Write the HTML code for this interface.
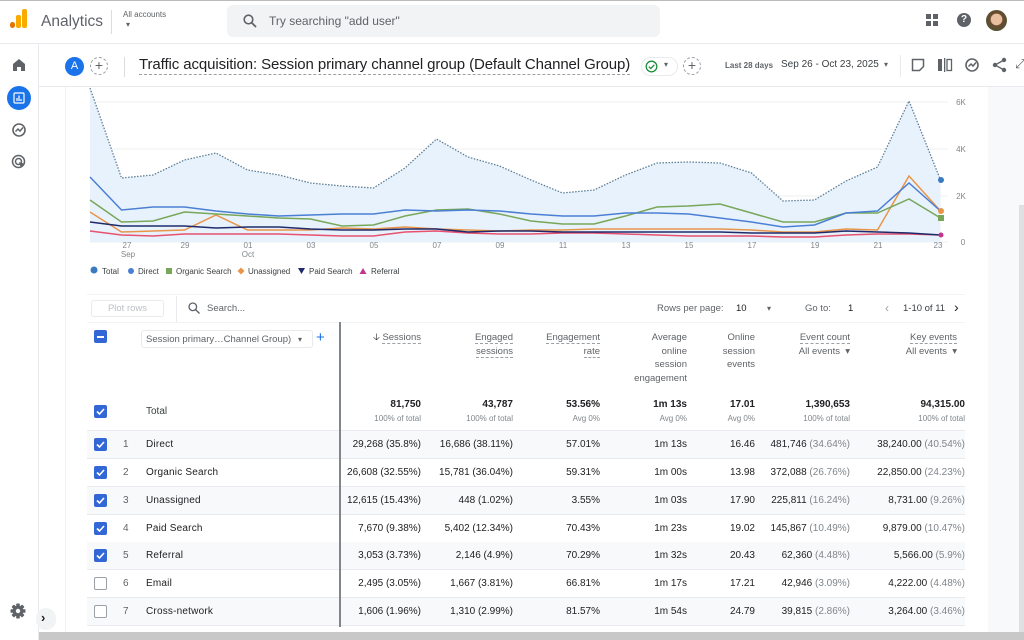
<!DOCTYPE html>
<html><head><meta charset="utf-8">
<style>
*{box-sizing:border-box;margin:0;padding:0}
body{width:1024px;height:640px;overflow:hidden;background:#fff;font-family:"Liberation Sans",Arial,sans-serif;color:#3c4043;position:relative}
.a{position:absolute}
.t{position:absolute;white-space:nowrap}
.cb{position:absolute;width:13px;height:13px;border-radius:2px;background:#3367d6}
.cb svg{position:absolute;left:1px;top:1px}
.cbo{position:absolute;width:13px;height:13px;border-radius:2px;border:1.5px solid #9aa0a6;background:#fff}
.row{position:absolute;left:87px;width:878px;height:28px;border-bottom:1px solid #e8eaed}
.g{background:#f8f9fa}
.c{position:absolute;font-size:10px;color:#202124;top:9px;white-space:nowrap;text-align:right}
.p{color:#80868b}
.h{font-size:9.5px;color:#5f6368;line-height:13.5px;text-align:right;position:absolute}
.u{border-bottom:1px dashed #9aa0a6}
.lb{position:absolute;white-space:nowrap;left:146px;font-size:10px;color:#202124;letter-spacing:0.2px}
</style></head><body>
<!-- top bar -->
<div class="a" style="left:0;top:0;width:1024px;height:1px;background:#bbb"></div>
<div class="a" style="left:0;top:43px;width:1024px;height:1px;background:#e8eaed"></div>
<div class="a" style="left:10px;top:22px;width:5px;height:6px;border-radius:3px;background:#e37400"></div>
<div class="a" style="left:16px;top:15px;width:5px;height:13px;border-radius:2px;background:#f9ab00"></div>
<div class="a" style="left:22px;top:9px;width:5px;height:19px;border-radius:2px;background:#f9ab00"></div>
<div class="t" style="left:41px;top:13px;font-size:15.5px;color:#5f6368">Analytics</div>
<div class="a" style="left:111px;top:10px;width:1px;height:24px;background:#dadce0"></div>
<div class="t" style="left:123px;top:10px;font-size:8px;color:#5f6368">All accounts</div>
<div class="t" style="left:126px;top:20px;font-size:8px;color:#5f6368">▾</div>
<div class="a" style="left:227px;top:5px;width:433px;height:32px;border-radius:6px;background:#f1f3f4"></div>
<svg class="a" style="left:243px;top:14px" width="14" height="14"><circle cx="5.5" cy="5.5" r="4.3" fill="none" stroke="#5f6368" stroke-width="1.6"/><path d="M8.6 8.6L13 13" stroke="#5f6368" stroke-width="1.8"/></svg>
<div class="t" style="left:269px;top:14px;font-size:12px;color:#5f6368">Try searching "add user"</div>
<svg class="a" style="left:926px;top:14px" width="12" height="12"><rect x="0" y="0" width="5" height="5" fill="#5f6368"/><rect x="7" y="0" width="5" height="5" fill="#5f6368"/><rect x="0" y="7" width="5" height="5" fill="#5f6368"/><rect x="7" y="7" width="5" height="5" fill="#5f6368"/></svg>
<div class="a" style="left:957px;top:13px;width:14px;height:14px;border-radius:50%;background:#5f6368;color:#fff;font-size:10px;font-weight:bold;text-align:center;line-height:14px">?</div>
<div class="a" style="left:986px;top:10px;width:21px;height:21px;border-radius:50%;background:radial-gradient(circle at 50% 45%,#e8c0a0 0 35%,#6b4a2e 40%,#3d5a3a 100%)"></div>
<!-- left nav -->
<div class="a" style="left:38px;top:44px;width:1px;height:596px;background:#e8eaed"></div>
<svg class="a" style="left:12px;top:58px" width="14" height="14"><path d="M1 6L7 1L13 6V13H9V9H5V13H1Z" fill="#5f6368"/></svg>
<div class="a" style="left:7px;top:86px;width:24px;height:24px;border-radius:50%;background:#1a73e8"></div>
<svg class="a" style="left:13px;top:92px" width="12" height="12"><rect x="1" y="1" width="10" height="10" rx="1" fill="none" stroke="#fff" stroke-width="1.2"/><path d="M4 9V6M6 9V3.5M8 9V7" stroke="#fff" stroke-width="1.2"/></svg>
<svg class="a" style="left:11px;top:122px" width="16" height="16"><circle cx="8" cy="8" r="6" fill="none" stroke="#5f6368" stroke-width="1.6"/><path d="M4.5 9.5L7 7L9 9L12 5.5" fill="none" stroke="#5f6368" stroke-width="1.5"/></svg>
<svg class="a" style="left:11px;top:154px" width="16" height="16"><circle cx="7.5" cy="7.5" r="6" fill="none" stroke="#5f6368" stroke-width="1.5"/><circle cx="7.5" cy="7.5" r="3" fill="none" stroke="#5f6368" stroke-width="1.5"/><path d="M8 8L14 10L11.5 11.5L10 14Z" fill="#5f6368"/></svg>
<svg class="a" style="left:10px;top:603px" width="16" height="16"><g fill="#5f6368" transform="translate(8 8)"><rect x="-1.8" y="-7.5" width="3.6" height="15" rx="0.8"/><rect x="-1.8" y="-7.5" width="3.6" height="15" rx="0.8" transform="rotate(45)"/><rect x="-1.8" y="-7.5" width="3.6" height="15" rx="0.8" transform="rotate(90)"/><rect x="-1.8" y="-7.5" width="3.6" height="15" rx="0.8" transform="rotate(135)"/><circle r="5.3"/><circle r="2.2" fill="#fff"/></g></svg>
<div class="a" style="left:36px;top:608px;width:20px;height:22px;border-radius:10px;background:#f1f3f4"></div>
<div class="t" style="left:41px;top:610px;font-size:13px;color:#202124;font-weight:bold">›</div>
<!-- subheader -->
<div class="a" style="left:39px;top:86px;width:985px;height:1px;background:#e8eaed"></div>
<div class="a" style="left:65px;top:57px;width:19px;height:19px;border-radius:50%;background:#1a73e8;color:#fff;font-size:11px;text-align:center;line-height:19px">A</div>
<div class="a" style="left:90px;top:57px;width:18px;height:18px;border-radius:50%;border:1px dashed #9aa0a6;color:#5f6368;font-size:14px;text-align:center;line-height:15px">+</div>
<div class="a" style="left:124px;top:57px;width:1px;height:20px;background:#dadce0"></div>
<div class="t" style="left:139px;top:56px;font-size:15px;letter-spacing:-0.1px;color:#202124;border-bottom:1px dashed #9aa0a6;line-height:18px">Traffic acquisition: Session primary channel group (Default Channel Group)</div>
<div class="a" style="left:641px;top:57px;width:37px;height:19px;border-radius:10px;border:1px solid #e8eaed;background:#fff"></div>
<svg class="a" style="left:645px;top:60px" width="13" height="13"><circle cx="6.5" cy="6.5" r="5.3" fill="none" stroke="#1e8e3e" stroke-width="1.3"/><path d="M3.8 6.7L5.8 8.6L9.3 4.8" fill="none" stroke="#1e8e3e" stroke-width="1.3"/></svg>
<div class="t" style="left:664px;top:60px;font-size:8px;color:#5f6368">▾</div>
<div class="a" style="left:683px;top:57px;width:18px;height:18px;border-radius:50%;border:1px dashed #9aa0a6;color:#5f6368;font-size:14px;text-align:center;line-height:15px">+</div>
<div class="t" style="left:725px;top:61px;font-size:8px;color:#5f6368;font-weight:bold">Last 28 days</div>
<div class="t" style="left:781px;top:59px;font-size:10px;color:#3c4043">Sep 26 - Oct 23, 2025</div>
<div class="t" style="left:884px;top:60px;font-size:8px;color:#5f6368">▾</div>
<div class="a" style="left:900px;top:55px;width:1px;height:22px;background:#e8eaed"></div>
<svg class="a" style="left:911px;top:58px" width="14" height="14"><path d="M1.5 1.5H12.5V8.5L8.5 12.5H1.5Z" fill="none" stroke="#5f6368" stroke-width="1.5"/></svg>
<svg class="a" style="left:937px;top:58px" width="16" height="14"><rect x="1" y="1" width="4" height="12" fill="#5f6368"/><rect x="7" y="0" width="1.3" height="14" fill="#5f6368"/><rect x="10" y="1.5" width="4.5" height="11" fill="none" stroke="#5f6368" stroke-width="1.3"/></svg>
<svg class="a" style="left:964px;top:57px" width="16" height="16"><circle cx="8" cy="8" r="6" fill="none" stroke="#5f6368" stroke-width="1.6"/><path d="M4.5 9.5L7 7L9 9L12 5.5" fill="none" stroke="#5f6368" stroke-width="1.5"/></svg>
<svg class="a" style="left:992px;top:57px" width="15" height="16"><circle cx="12" cy="3" r="2.2" fill="#5f6368"/><circle cx="3" cy="8" r="2.2" fill="#5f6368"/><circle cx="12" cy="13" r="2.2" fill="#5f6368"/><path d="M12 3L3 8L12 13" fill="none" stroke="#5f6368" stroke-width="1.3"/></svg>
<div class="t" style="left:1015px;top:56px;font-size:13px;color:#5f6368">⤢</div>
<!-- right gutter -->
<div class="a" style="left:988px;top:87px;width:36px;height:545px;background:#f8f9fa"></div>
<div class="a" style="left:1019px;top:205px;width:5px;height:427px;background:#e0e0e0"></div>
<div class="a" style="left:39px;top:632px;width:985px;height:8px;background:#c8c8c8"></div>
<div class="a" style="left:65px;top:87px;width:1px;height:545px;background:#eef0f2"></div>
<!-- chart -->
<svg class="a" style="left:0;top:0" width="1024" height="640">
<g stroke="#eef0f2" stroke-width="1"><line x1="90" y1="102" x2="948" y2="102"/><line x1="90" y1="149" x2="948" y2="149"/><line x1="90" y1="196" x2="948" y2="196"/><line x1="90" y1="242" x2="948" y2="242"/></g>
<polygon fill="#e8f2fc" points="90,242 90,88 121.5,178 153,175 184.5,160 216,153 247.5,170 279,175 310.5,183 342,186 373.5,188 405,168 436.5,139 468,157 499.5,166 531,180 562.5,193 594,190 625.5,175 657,163 688.5,162 720,163 751.5,173 783,201 814.5,200 846,181 877.5,167 909,101 940.5,180 940.5,242"/>
<polyline fill="none" stroke="#5f7f95" stroke-width="1.3" stroke-dasharray="1.5 1.5" points="90,88 121.5,178 153,175 184.5,160 216,153 247.5,170 279,175 310.5,183 342,186 373.5,188 405,168 436.5,139 468,157 499.5,166 531,180 562.5,193 594,190 625.5,175 657,163 688.5,162 720,163 751.5,173 783,201 814.5,200 846,181 877.5,167 909,101 940.5,180"/>
<polyline fill="none" stroke="#e8516f" stroke-width="1.5" points="90,231 121.5,235 153,236 184.5,234 216,234 247.5,234 279,234 310.5,235 342,236 373.5,236 405,232 436.5,231 468,233 499.5,234 531,234 562.5,233 594,233 625.5,234 657,235 688.5,236 720,236 751.5,236 783,237 814.5,237 846,235 877.5,234 909,234 940.5,235"/>
<polyline fill="none" stroke="#e8954a" stroke-width="1.5" points="90,212 121.5,232 153,231 184.5,230 216,215 247.5,230 279,230 310.5,230 342,228 373.5,229 405,227 436.5,229 468,230 499.5,231 531,230 562.5,230 594,229 625.5,229 657,229 688.5,229 720,229 751.5,230 783,232 814.5,232 846,229 877.5,230 909,176 940.5,211"/>
<polyline fill="none" stroke="#1f2a6b" stroke-width="1.5" points="90,222 121.5,226 153,226 184.5,226 216,228 247.5,227 279,227 310.5,229 342,230 373.5,230 405,229 436.5,229 468,232 499.5,231 531,231 562.5,232 594,232 625.5,232 657,232 688.5,232 720,232 751.5,233 783,233 814.5,233 846,231 877.5,232 909,233 940.5,235"/>
<polyline fill="none" stroke="#78a75a" stroke-width="1.5" points="90,200 121.5,222 153,221 184.5,212 216,214 247.5,216 279,218 310.5,219 342,226 373.5,225 405,216 436.5,210 468,209 499.5,214 531,221 562.5,224 594,224 625.5,216 657,207 688.5,206 720,204 751.5,213 783,222 814.5,222 846,213 877.5,213 909,199 940.5,218"/>
<polyline fill="none" stroke="#4a7fd4" stroke-width="1.5" points="90,177 121.5,210 153,207 184.5,207 216,211 247.5,214 279,216 310.5,215 342,214 373.5,214 405,210 436.5,211 468,210 499.5,211 531,214 562.5,216 594,216 625.5,213 657,213 688.5,214 720,218 751.5,222 783,227 814.5,225 846,213 877.5,211 909,183 940.5,211"/>
<circle cx="941" cy="180" r="3" fill="#3a7bbf"/><circle cx="941" cy="211" r="3" fill="#e8954a"/><rect x="938" y="215" width="6" height="6" fill="#78a75a"/><circle cx="941" cy="235" r="2.5" fill="#c2368a"/>
<g font-family="Liberation Sans" font-size="8" fill="#80868b" text-anchor="middle">
<text x="127" y="248">27</text><text x="128" y="257">Sep</text><text x="185" y="248">29</text><text x="248" y="248">01</text><text x="248" y="257">Oct</text><text x="311" y="248">03</text><text x="374" y="248">05</text><text x="437" y="248">07</text><text x="500" y="248">09</text><text x="563" y="248">11</text><text x="626" y="248">13</text><text x="689" y="248">15</text><text x="752" y="248">17</text><text x="815" y="248">19</text><text x="878" y="248">21</text><text x="938" y="248">23</text>
<text x="961" y="105">6K</text><text x="961" y="152">4K</text><text x="961" y="199">2K</text><text x="963" y="245">0</text></g>
<g font-family="Liberation Sans" font-size="8" fill="#3c4043">
<circle cx="94" cy="270" r="3.5" fill="#3a7bbf"/><text x="102" y="274">Total</text>
<circle cx="131" cy="271" r="3" fill="#4a7fd4"/><text x="138" y="274">Direct</text>
<rect x="166" y="268" width="6" height="6" fill="#78a75a"/><text x="176" y="274">Organic Search</text>
<path d="M241 267.5L244.5 271L241 274.5L237.5 271Z" fill="#e8954a"/><text x="248" y="274">Unassigned</text>
<path d="M298 268H305L301.5 274Z" fill="#1f2a6b"/><text x="309" y="274">Paid Search</text>
<path d="M363 268L366.5 274H359.5Z" fill="#c2368a"/><text x="371" y="274">Referral</text></g>
</svg>
<!-- table toolbar -->
<div class="a" style="left:87px;top:294px;width:878px;height:1px;background:#f1f3f4"></div>
<div class="a" style="left:91px;top:300px;width:73px;height:17px;border:1px solid #e8eaed;border-radius:3px;font-size:9.5px;color:#bdc1c6;text-align:center;line-height:15px">Plot rows</div>
<div class="a" style="left:176px;top:296px;width:1px;height:26px;background:#e8eaed"></div>
<svg class="a" style="left:188px;top:302px" width="12" height="12"><circle cx="4.8" cy="4.8" r="3.8" fill="none" stroke="#5f6368" stroke-width="1.3"/><path d="M7.6 7.6L11.5 11.5" stroke="#5f6368" stroke-width="1.4"/></svg>
<div class="t" style="left:207px;top:303px;font-size:9.5px;color:#5f6368">Search...</div>
<div class="t" style="left:657px;top:303px;font-size:9.5px;color:#5f6368">Rows per page:</div>
<div class="t" style="left:736px;top:303px;font-size:9.5px;color:#202124">10</div>
<div class="t" style="left:767px;top:304px;font-size:8px;color:#5f6368">▾</div>
<div class="t" style="left:805px;top:303px;font-size:9.5px;color:#5f6368">Go to:</div>
<div class="t" style="left:848px;top:303px;font-size:9.5px;color:#202124">1</div>
<div class="t" style="left:885px;top:301px;font-size:12px;color:#9aa0a6">‹</div>
<div class="t" style="left:903px;top:303px;font-size:9.5px;color:#3c4043">1-10 of 11</div>
<div class="t" style="left:954px;top:299px;font-size:14px;color:#202124">›</div>
<div class="a" style="left:87px;top:322px;width:878px;height:1px;background:#f1f3f4"></div>
<!-- header -->
<div class="cb" style="left:94px;top:330px"><div style="position:absolute;left:3px;top:5.5px;width:7px;height:2px;background:#fff"></div></div>
<div class="a" style="left:141px;top:330px;width:172px;height:18px;border:1px solid #e8eaed;border-radius:3px"></div>
<div class="t" style="left:146px;top:334px;font-size:9.5px;color:#5f6368">Session primary…Channel Group)</div>
<div class="t" style="left:298px;top:335px;font-size:8px;color:#5f6368">▾</div>
<div class="t" style="left:316px;top:329px;font-size:15px;color:#1a73e8">+</div>
<div class="h" style="right:603px;top:331px"><span style="color:#202124">🡣</span> <span class="u">Sessions</span></div>
<div class="h" style="right:511px;top:331px"><span class="u">Engaged</span><br><span class="u">sessions</span></div>
<div class="h" style="right:424px;top:331px"><span class="u">Engagement</span><br><span class="u">rate</span></div>
<div class="h" style="right:337px;top:331px">Average<br>online<br>session<br>engagement</div>
<div class="h" style="right:269px;top:331px">Online<br>session<br>events</div>
<div class="h" style="right:174px;top:331px"><span class="u">Event count</span><br>All events &nbsp;▾</div>
<div class="h" style="right:67px;top:331px"><span class="u">Key events</span><br>All events &nbsp;▾</div>
<!-- total -->
<div class="cb" style="left:94px;top:405px"><svg width="11" height="11"><path d="M2 5.5L4.5 8L9 3" fill="none" stroke="#fff" stroke-width="1.6"/></svg></div>
<div class="t" style="left:146px;top:406px;font-size:10px;color:#3c4043">Total</div>
<div class="c" style="right:603px;top:399px;font-weight:bold">81,750</div><div class="c p" style="right:603px;top:414px;font-size:8px">100% of total</div>
<div class="c" style="right:511px;top:399px;font-weight:bold">43,787</div><div class="c p" style="right:511px;top:414px;font-size:8px">100% of total</div>
<div class="c" style="right:424px;top:399px;font-weight:bold">53.56%</div><div class="c p" style="right:424px;top:414px;font-size:8px">Avg 0%</div>
<div class="c" style="right:337px;top:399px;font-weight:bold">1m 13s</div><div class="c p" style="right:337px;top:414px;font-size:8px">Avg 0%</div>
<div class="c" style="right:269px;top:399px;font-weight:bold">17.01</div><div class="c p" style="right:269px;top:414px;font-size:8px">Avg 0%</div>
<div class="c" style="right:174px;top:399px;font-weight:bold">1,390,653</div><div class="c p" style="right:174px;top:414px;font-size:8px">100% of total</div>
<div class="c" style="right:59px;top:399px;font-weight:bold">94,315.00</div><div class="c p" style="right:59px;top:414px;font-size:8px">100% of total</div>
<div class="a" style="left:87px;top:430px;width:878px;height:1px;background:#e8eaed"></div>
<!-- rows -->
<div class="row g" style="top:431px"></div>
<div class="row" style="top:459px"></div>
<div class="row g" style="top:487px"></div>
<div class="row" style="top:515px"></div>
<div class="row g" style="top:542px"></div>
<div class="row" style="top:570px"></div>
<div class="row g" style="top:598px"></div>
<div class="a" style="left:339px;top:322px;width:1.5px;height:305px;background:#80868b"></div>

<div class="cb" style="left:94px;top:438px"><svg width="11" height="11"><path d="M2 5.5L4.5 8L9 3" fill="none" stroke="#fff" stroke-width="1.6"/></svg></div>
<div class="cb" style="left:94px;top:466px"><svg width="11" height="11"><path d="M2 5.5L4.5 8L9 3" fill="none" stroke="#fff" stroke-width="1.6"/></svg></div>
<div class="cb" style="left:94px;top:494px"><svg width="11" height="11"><path d="M2 5.5L4.5 8L9 3" fill="none" stroke="#fff" stroke-width="1.6"/></svg></div>
<div class="cb" style="left:94px;top:522px"><svg width="11" height="11"><path d="M2 5.5L4.5 8L9 3" fill="none" stroke="#fff" stroke-width="1.6"/></svg></div>
<div class="cb" style="left:94px;top:549px"><svg width="11" height="11"><path d="M2 5.5L4.5 8L9 3" fill="none" stroke="#fff" stroke-width="1.6"/></svg></div>
<div class="cbo" style="left:94px;top:577px"></div>
<div class="cbo" style="left:94px;top:605px"></div>

<div style="font-size:10px;color:#5f6368">
<div class="t" style="left:123px;top:439px">1</div><div class="lb" style="top:439px">Direct</div>
<div class="t" style="left:123px;top:467px">2</div><div class="lb" style="top:467px">Organic Search</div>
<div class="t" style="left:123px;top:495px">3</div><div class="lb" style="top:495px">Unassigned</div>
<div class="t" style="left:123px;top:523px">4</div><div class="lb" style="top:523px">Paid Search</div>
<div class="t" style="left:123px;top:550px">5</div><div class="lb" style="top:550px">Referral</div>
<div class="t" style="left:123px;top:578px">6</div><div class="lb" style="top:578px">Email</div>
<div class="t" style="left:123px;top:606px">7</div><div class="lb" style="top:606px">Cross-network</div>
</div>

<div class="c" style="right:603px;top:439px">29,268 (35.8%)</div><div class="c" style="right:511px;top:439px">16,686 (38.11%)</div><div class="c" style="right:424px;top:439px">57.01%</div><div class="c" style="right:337px;top:439px">1m 13s</div><div class="c" style="right:269px;top:439px">16.46</div><div class="c" style="right:174px;top:439px">481,746 <span class="p">(34.64%)</span></div><div class="c" style="right:59px;top:439px">38,240.00 <span class="p">(40.54%)</span></div>
<div class="c" style="right:603px;top:467px">26,608 (32.55%)</div><div class="c" style="right:511px;top:467px">15,781 (36.04%)</div><div class="c" style="right:424px;top:467px">59.31%</div><div class="c" style="right:337px;top:467px">1m 00s</div><div class="c" style="right:269px;top:467px">13.98</div><div class="c" style="right:174px;top:467px">372,088 <span class="p">(26.76%)</span></div><div class="c" style="right:59px;top:467px">22,850.00 <span class="p">(24.23%)</span></div>
<div class="c" style="right:603px;top:495px">12,615 (15.43%)</div><div class="c" style="right:511px;top:495px">448 (1.02%)</div><div class="c" style="right:424px;top:495px">3.55%</div><div class="c" style="right:337px;top:495px">1m 03s</div><div class="c" style="right:269px;top:495px">17.90</div><div class="c" style="right:174px;top:495px">225,811 <span class="p">(16.24%)</span></div><div class="c" style="right:59px;top:495px">8,731.00 <span class="p">(9.26%)</span></div>
<div class="c" style="right:603px;top:523px">7,670 (9.38%)</div><div class="c" style="right:511px;top:523px">5,402 (12.34%)</div><div class="c" style="right:424px;top:523px">70.43%</div><div class="c" style="right:337px;top:523px">1m 23s</div><div class="c" style="right:269px;top:523px">19.02</div><div class="c" style="right:174px;top:523px">145,867 <span class="p">(10.49%)</span></div><div class="c" style="right:59px;top:523px">9,879.00 <span class="p">(10.47%)</span></div>
<div class="c" style="right:603px;top:550px">3,053 (3.73%)</div><div class="c" style="right:511px;top:550px">2,146 (4.9%)</div><div class="c" style="right:424px;top:550px">70.29%</div><div class="c" style="right:337px;top:550px">1m 32s</div><div class="c" style="right:269px;top:550px">20.43</div><div class="c" style="right:174px;top:550px">62,360 <span class="p">(4.48%)</span></div><div class="c" style="right:59px;top:550px">5,566.00 <span class="p">(5.9%)</span></div>
<div class="c" style="right:603px;top:578px">2,495 (3.05%)</div><div class="c" style="right:511px;top:578px">1,667 (3.81%)</div><div class="c" style="right:424px;top:578px">66.81%</div><div class="c" style="right:337px;top:578px">1m 17s</div><div class="c" style="right:269px;top:578px">17.21</div><div class="c" style="right:174px;top:578px">42,946 <span class="p">(3.09%)</span></div><div class="c" style="right:59px;top:578px">4,222.00 <span class="p">(4.48%)</span></div>
<div class="c" style="right:603px;top:606px">1,606 (1.96%)</div><div class="c" style="right:511px;top:606px">1,310 (2.99%)</div><div class="c" style="right:424px;top:606px">81.57%</div><div class="c" style="right:337px;top:606px">1m 54s</div><div class="c" style="right:269px;top:606px">24.79</div><div class="c" style="right:174px;top:606px">39,815 <span class="p">(2.86%)</span></div><div class="c" style="right:59px;top:606px">3,264.00 <span class="p">(3.46%)</span></div>
</body></html>
